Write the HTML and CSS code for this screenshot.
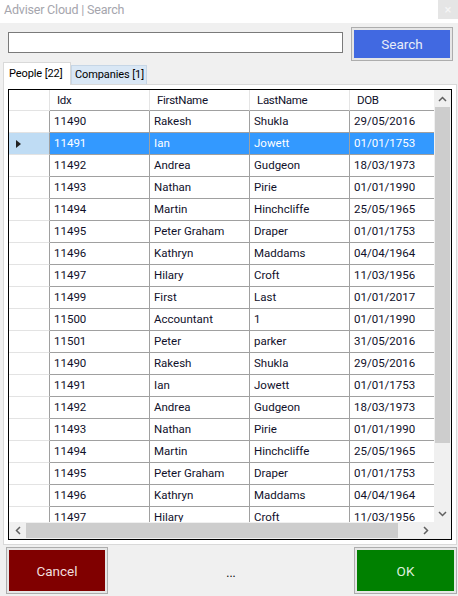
FILE: index.html
```html
<!DOCTYPE html>
<html>
<head>
<meta charset="utf-8">
<title>Adviser Cloud | Search</title>
<link rel="stylesheet" href="styles.css">
</head>
<body>
<div class="window">
  <div class="titlebar">
    <span class="title">Adviser Cloud | Search</span>
    <span class="close">×</span>
  </div>
  <div class="searchrow">
    <input class="searchbox" type="text">
    <div class="btn-frame search-frame"><div class="btn btn-search">Search</div></div>
  </div>
  <div class="tabs">
    <div class="tab active">People [22]</div>
    <div class="tab">Companies [1]</div>
  </div>
  <div class="panel">
    <div class="grid">
      <div class="table">
        <div class="row head">
          <div class="rh"></div>
          <div class="cell">Idx</div>
          <div class="cell">FirstName</div>
          <div class="cell">LastName</div>
          <div class="cell">DOB</div>
        </div>
        <div class="row"><div class="rh"></div><div class="cell">11490</div><div class="cell">Rakesh</div><div class="cell">Shukla</div><div class="cell">29/05/2016</div></div>
        <div class="row sel"><div class="rh"><span class="tri"></span></div><div class="cell">11491</div><div class="cell">Ian</div><div class="cell">Jowett</div><div class="cell">01/01/1753</div></div>
        <div class="row"><div class="rh"></div><div class="cell">11492</div><div class="cell">Andrea</div><div class="cell">Gudgeon</div><div class="cell">18/03/1973</div></div>
        <div class="row"><div class="rh"></div><div class="cell">11493</div><div class="cell">Nathan</div><div class="cell">Pirie</div><div class="cell">01/01/1990</div></div>
        <div class="row"><div class="rh"></div><div class="cell">11494</div><div class="cell">Martin</div><div class="cell">Hinchcliffe</div><div class="cell">25/05/1965</div></div>
        <div class="row"><div class="rh"></div><div class="cell">11495</div><div class="cell">Peter Graham</div><div class="cell">Draper</div><div class="cell">01/01/1753</div></div>
        <div class="row"><div class="rh"></div><div class="cell">11496</div><div class="cell">Kathryn</div><div class="cell">Maddams</div><div class="cell">04/04/1964</div></div>
        <div class="row"><div class="rh"></div><div class="cell">11497</div><div class="cell">Hilary</div><div class="cell">Croft</div><div class="cell">11/03/1956</div></div>
        <div class="row"><div class="rh"></div><div class="cell">11499</div><div class="cell">First</div><div class="cell">Last</div><div class="cell">01/01/2017</div></div>
        <div class="row"><div class="rh"></div><div class="cell">11500</div><div class="cell">Accountant</div><div class="cell">1</div><div class="cell">01/01/1990</div></div>
        <div class="row"><div class="rh"></div><div class="cell">11501</div><div class="cell">Peter</div><div class="cell">parker</div><div class="cell">31/05/2016</div></div>
        <div class="row"><div class="rh"></div><div class="cell">11490</div><div class="cell">Rakesh</div><div class="cell">Shukla</div><div class="cell">29/05/2016</div></div>
        <div class="row"><div class="rh"></div><div class="cell">11491</div><div class="cell">Ian</div><div class="cell">Jowett</div><div class="cell">01/01/1753</div></div>
        <div class="row"><div class="rh"></div><div class="cell">11492</div><div class="cell">Andrea</div><div class="cell">Gudgeon</div><div class="cell">18/03/1973</div></div>
        <div class="row"><div class="rh"></div><div class="cell">11493</div><div class="cell">Nathan</div><div class="cell">Pirie</div><div class="cell">01/01/1990</div></div>
        <div class="row"><div class="rh"></div><div class="cell">11494</div><div class="cell">Martin</div><div class="cell">Hinchcliffe</div><div class="cell">25/05/1965</div></div>
        <div class="row"><div class="rh"></div><div class="cell">11495</div><div class="cell">Peter Graham</div><div class="cell">Draper</div><div class="cell">01/01/1753</div></div>
        <div class="row"><div class="rh"></div><div class="cell">11496</div><div class="cell">Kathryn</div><div class="cell">Maddams</div><div class="cell">04/04/1964</div></div>
        <div class="row"><div class="rh"></div><div class="cell">11497</div><div class="cell">Hilary</div><div class="cell">Croft</div><div class="cell">11/03/1956</div></div>
      </div>
      <div class="vscroll">
        <div class="arrow"><svg width="9" height="6" viewBox="0 0 9 6"><path d="M1 5 L4.5 1.5 L8 5" fill="none" stroke="#606060" stroke-width="1.5"/></svg></div>
        <div class="vthumb"></div>
        <div class="vtrack"></div>
        <div class="arrow"><svg width="9" height="6" viewBox="0 0 9 6"><path d="M1 1 L4.5 4.5 L8 1" fill="none" stroke="#606060" stroke-width="1.5"/></svg></div>
      </div>
      <div class="hscroll">
        <div class="harrow"><svg width="6" height="9" viewBox="0 0 6 9"><path d="M5 1 L1.5 4.5 L5 8" fill="none" stroke="#606060" stroke-width="1.5"/></svg></div>
        <div class="hthumb"></div>
        <div class="htrack"></div>
        <div class="harrow"><svg width="6" height="9" viewBox="0 0 6 9"><path d="M1 1 L4.5 4.5 L1 8" fill="none" stroke="#606060" stroke-width="1.5"/></svg></div>
      </div>
      <div class="corner"></div>
    </div>
  </div>
  <div class="footer">
    <div class="btn-frame cancel-frame"><div class="btn btn-cancel">Cancel</div></div>
    <div class="dots">...</div>
    <div class="btn-frame ok-frame"><div class="btn btn-ok">OK</div></div>
  </div>
</div>
</body>
</html>
```
FILE: styles.css
```css
* { box-sizing: border-box; }
html, body { margin: 0; padding: 0; }
body {
  width: 458px;
  height: 596px;
  background: #f0f0f0;
  font-family: Roboto, "Noto Sans", sans-serif;
  font-size: 11.5px;
  color: #000;
  overflow: hidden;
}
.window { width: 458px; height: 596px; display: flex; flex-direction: column; }

.titlebar {
  height: 23px;
  background: #fff;
  display: flex;
  align-items: flex-start;
  justify-content: space-between;
}
.title {
  padding-left: 4px;
  padding-top: 2px;
  font-size: 12.5px;
  color: #a5a5ad;
  letter-spacing: -0.2px;
}
.close {
  width: 20px;
  height: 19px;
  background: #e5e5e5;
  color: #f6f6f6;
  font-size: 13px;
  text-align: center;
  line-height: 19px;
}

.searchrow {
  height: 39px;
  display: flex;
  align-items: flex-start;
  padding-left: 8px;
  padding-top: 4px;
}
.searchbox {
  width: 335px;
  height: 21px;
  margin: 5px 0 0 0;
  border: 1px solid #7a7a7a;
  background: #fff;
  padding: 0;
  outline: none;
}
.btn-frame {
  border: 1px solid #adadad;
  padding: 2px;
  background: #e6e6e6;
}
.search-frame { margin-left: 8px; width: 102px; height: 34px; }
.btn {
  width: 100%;
  height: 100%;
  display: flex;
  align-items: center;
  justify-content: center;
  font-size: 13.5px;
}
.btn-search { background: #4169e1; color: #e8ecf8; }

.tabs {
  height: 22px;
  display: flex;
  align-items: flex-end;
  padding-left: 3px;
  position: relative;
  z-index: 1;
}
.tab {
  height: 19px;
  padding: 0 0 0 3px;
  width: 76px;
  background: #d9e7f5;
  border: 1px solid #c6d6e6;
  border-bottom: none;
  font-size: 11px;
  line-height: 18px;
  color: #000;
  white-space: nowrap;
  overflow: hidden;
  letter-spacing: -0.1px;
}
.tab.active {
  width: 68px;
  height: 23px;
  margin-bottom: -1px;
  background: #fff;
  border-color: #d9d9d9;
  padding-left: 5px;
  line-height: 21px;
}

.panel {
  margin-left: 3px;
  width: 454px;
  height: 461px;
  background: #fff;
  border: 1px solid #d9d9d9;
  padding: 4px;
}
.grid {
  width: 444px;
  height: 451px;
  border: 1px solid #000;
  display: grid;
  grid-template-columns: 425px 17px;
  grid-template-rows: 432px 17px;
  background: #fff;
}
.table { overflow: hidden; }
.row { display: flex; height: 22px; }
.rh {
  flex: 0 0 41px;
  border-right: 1px solid #a0a0a0;
  border-bottom: 1px solid #e3e3e3;
  display: flex;
  align-items: center;
  padding-left: 7px;
}
.cell {
  flex: 0 0 100px;
  border-right: 1px solid #a0a0a0;
  border-bottom: 1px solid #a0a0a0;
  padding-left: 4px;
  line-height: 21px;
  white-space: nowrap;
  overflow: hidden;
  color: #10102a;
}
.row.head { height: 21px; }
.row.head .rh { border-right-color: #e3e3e3; }
.row.head .cell {
  padding-left: 7px;
  line-height: 20px;
  border-right-color: #e5e5e5;
  letter-spacing: -0.3px;
}
.row.sel .rh { background: #bfdcf4; }
.row.sel .cell { background: #3399ff; color: #fff; }
.tri {
  width: 0; height: 0;
  border-top: 4.5px solid transparent;
  border-bottom: 4.5px solid transparent;
  border-left: 5px solid #222;
}

.vscroll {
  background: #f0f0f0;
  display: flex;
  flex-direction: column;
  align-items: center;
}
.arrow { height: 17px; width: 17px; display: flex; align-items: center; justify-content: center; }
.vthumb { width: 15px; height: 336px; background: #cdcdcd; }
.vtrack { flex: 1; }
.hscroll {
  background: #f0f0f0;
  display: flex;
  align-items: center;
}
.harrow { width: 17px; height: 17px; display: flex; align-items: center; justify-content: center; }
.hthumb { width: 372px; height: 15px; background: #cdcdcd; }
.htrack { flex: 1; }
.corner { background: #f0f0f0; }

.footer {
  display: flex;
  justify-content: space-between;
  align-items: flex-start;
  padding: 2px 1px 0 6px;
}
.cancel-frame { width: 102px; height: 47px; }
.ok-frame { width: 103px; height: 47px; }
.btn-cancel { background: #800000; color: #f1dede; }
.btn-ok { background: #008000; color: #dff0df; }
.dots { margin-top: 19px; font-size: 12px; }
```
